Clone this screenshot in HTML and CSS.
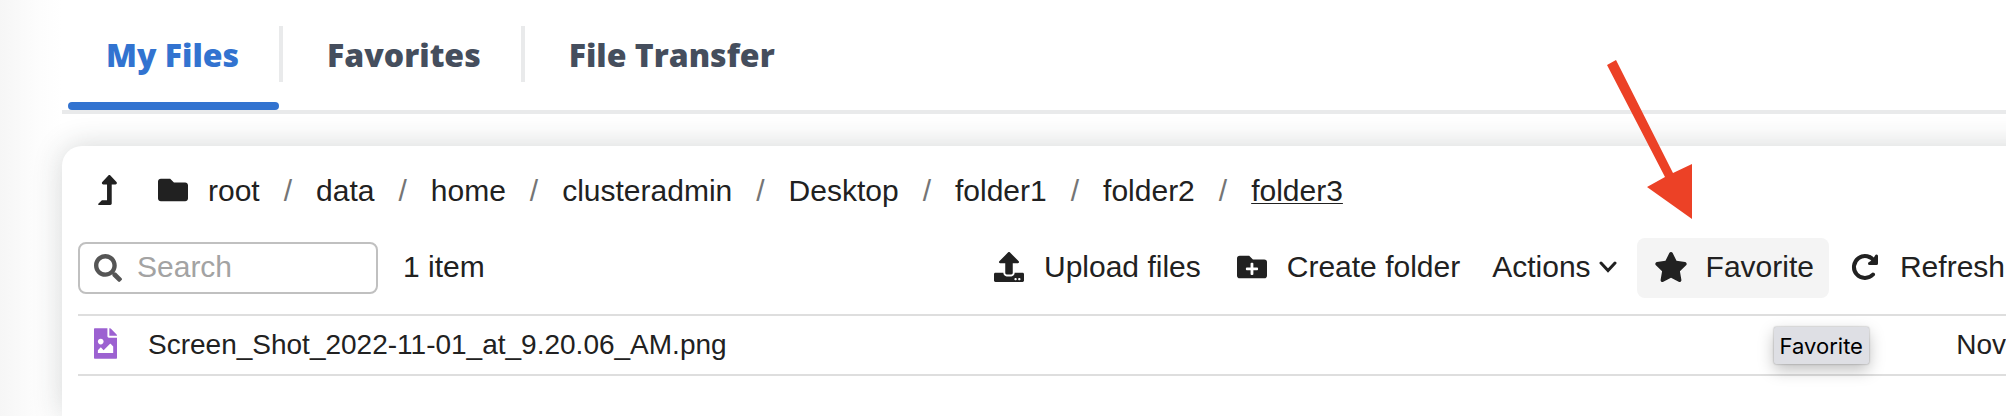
FILE: index.html
```html
<!DOCTYPE html>
<html lang="en">
<head>
<meta charset="utf-8">
<title>My Files</title>
<link rel="stylesheet" href="styles.css">
</head>
<body>
<main class="page">
  <nav class="tabs" aria-label="Sections">
    <a class="tab tab-active" href="#files">My Files</a>
    <a class="tab" href="#favorites">Favorites</a>
    <a class="tab" href="#transfer">File Transfer</a>
  </nav>
  <section class="panel">
    <div class="path">
      <button class="up" type="button" aria-label="Up one level"><svg class="icon-up" viewBox="0 0 320 512"><path d="M313.553 119.669L209.587 7.666c-9.485-10.214-25.676-10.229-35.174 0L70.438 119.669C56.232 134.969 67.062 160 88.025 160H152v272H68.024a11.996 11.996 0 0 0-8.485 3.515l-56 56C-4.021 499.074 1.333 512 12.024 512H208c13.255 0 24-10.745 24-24V160h63.966c20.878 0 31.851-24.969 17.587-40.331z"/></svg></button>
      <svg class="icon" viewBox="0 0 512 512"><path d="M464 128H272l-64-64H48C21.49 64 0 85.49 0 112v288c0 26.51 21.49 48 48 48h416c26.51 0 48-21.49 48-48V176c0-26.51-21.49-48-48-48z"/></svg>
      <ol class="crumbs">
        <li><a href="#root">root</a></li>
        <li><a href="#data">data</a></li>
        <li><a href="#home">home</a></li>
        <li><a href="#clusteradmin">clusteradmin</a></li>
        <li><a href="#desktop">Desktop</a></li>
        <li><a href="#folder1">folder1</a></li>
        <li><a href="#folder2">folder2</a></li>
        <li><a class="current" href="#folder3">folder3</a></li>
      </ol>
    </div>
    <div class="toolbar">
      <label class="search">
        <svg class="icon-search" viewBox="0 0 512 512"><path d="M505 442.7L405.300 343c-4.500-4.500-10.600-7-17-7H372c27.600-35.300 44-79.700 44-128C416 93.100 322.900 0 208 0S0 93.100 0 208s93.100 208 208 208c48.300 0 92.700-16.400 128-44v16.300c0 6.400 2.500 12.500 7 17l99.700 99.700c9.400 9.400 24.600 9.400 33.900 0l28.300-28.300c9.400-9.400 9.400-24.600.1-34zM208 336c-70.700 0-128-57.200-128-128 0-70.700 57.200-128 128-128 70.700 0 128 57.200 128 128 0 70.700-57.200 128-128 128z"/></svg>
        <input class="search-input" type="text" placeholder="Search" aria-label="Search">
      </label>
      <span class="count">1 item</span>
      <div class="actions">
        <button class="action" type="button"><span class="slot"><svg class="icon" viewBox="0 0 512 512"><path d="M296 384h-80c-13.300 0-24-10.700-24-24V192h-87.700c-17.800 0-26.700-21.500-14.100-34.100L242.300 5.700c7.500-7.500 19.800-7.500 27.300 0l152.200 152.200c12.600 12.600 3.700 34.100-14.100 34.100H320v168c0 13.300-10.700 24-24 24zm216-8v112c0 13.300-10.700 24-24 24H24c-13.300 0-24-10.700-24-24V376c0-13.300 10.700-24 24-24h136v8c0 30.900 25.100 56 56 56h80c30.900 0 56-25.100 56-56v-8h136c13.300 0 24 10.700 24 24zm-124 88c0-11-9-20-20-20s-20 9-20 20 9 20 20 20 20-9 20-20zm64 0c0-11-9-20-20-20s-20 9-20 20 9 20 20 20 20-9 20-20z"/></svg></span>Upload files</button>
        <button class="action" type="button"><span class="slot"><svg class="icon" viewBox="0 0 512 512"><path d="M464,128H272L208,64H48A48,48,0,0,0,0,112V400a48,48,0,0,0,48,48H464a48,48,0,0,0,48-48V176A48,48,0,0,0,464,128ZM359.500,296a16,16,0,0,1-16,16h-64v64a16,16,0,0,1-16,16h-16a16,16,0,0,1-16-16V312h-64a16,16,0,0,1-16-16V280a16,16,0,0,1,16-16h64V200a16,16,0,0,1,16-16h16a16,16,0,0,1,16,16v64h64a16,16,0,0,1,16,16Z"/></svg></span>Create folder</button>
        <button class="action action-menu" type="button">Actions<svg class="icon-chevron" viewBox="0 0 18 12"><path d="M2 2l7 7.500L16 2"/></svg></button>
        <button class="action action-hover" type="button"><span class="slot"><svg class="icon icon-star" viewBox="0 0 576 512"><path d="M259.300 17.800L194 150.200 47.900 171.500c-26.200 3.800-36.700 36.100-17.700 54.600l105.700 103-25 145.500c-4.500 26.300 23.200 46 46.400 33.700L288 439.600l130.700 68.700c23.200 12.200 50.900-7.400 46.400-33.700l-25-145.500 105.700-103c19-18.500 8.500-50.800-17.700-54.600L382 150.200 316.700 17.800c-11.700-23.600-45.600-23.900-57.400 0z"/></svg></span>Favorite<span class="tooltip" role="tooltip">Favorite</span></button>
        <button class="action action-last" type="button"><span class="slot"><svg class="icon icon-refresh" viewBox="0 0 30 30"><path class="arc" d="M23 22.500A11 11 0 1 1 24.500 9.500"/><path class="head" d="M26.500 4V11.500H19.500L23.500 9Z"/></svg></span>Refresh</button>
      </div>
    </div>
    <table class="files">
      <tr>
        <td class="type"><svg class="icon-image" viewBox="0 0 384 512"><path d="M384 121.941V128H256V0h6.059a24 24 0 0 1 16.970 7.029l97.941 97.941a24.002 24.002 0 0 1 7.030 16.971zM248 160c-13.200 0-24-10.800-24-24V0H12C5 0 0 5 0 12v488c0 7 5 12 12 12h360c7 0 12-5 12-12V160H248zm-135.455 16c26.510 0 48 21.490 48 48s-21.490 48-48 48-48-21.490-48-48 21.491-48 48-48zm208 240h-256l.485-48.485L104.545 328c4.686-4.686 11.799-4.201 16.485.485L160.545 368 264.060 264.485c4.686-4.686 12.284-4.686 16.971 0L320.545 304v112z"/></svg></td>
        <td class="name">Screen_Shot_2022-11-01_at_9.20.06_AM.png</td>
        <td class="date">Nov</td>
      </tr>
    </table>
  </section>
</main>
<svg class="pointer" viewBox="0 0 86 160" aria-hidden="true"><path d="M0 5L9 0L66 113L85 104V159L40 127L58 117Z"/></svg>
</body>
</html>
```
FILE: styles.css
```css
* { box-sizing: border-box; }

body {
  margin: 0;
  min-height: 100vh;
  overflow: hidden;
  background: linear-gradient(to right, #f6f6f6 0, #fdfdfd 40px, #fff 62px);
  color: #212121;
  font: 30px/36px "Liberation Sans", Arial, sans-serif;
}

a { color: inherit; text-decoration: none; }
svg { display: block; flex: none; fill: currentColor; }

button {
  padding: 0;
  border: 0;
  background: none;
  color: inherit;
  font: inherit;
}

.page {
  display: flex;
  flex-direction: column;
  min-height: 100vh;
  padding-left: 62px;
}

.tabs {
  display: grid;
  grid-auto-flow: column;
  justify-content: start;
  padding-left: 6px;
  border-bottom: 4px solid #e9eaeb;
}

.tab {
  display: grid;
  grid-template: 58px 18px 8px / 1fr auto;
  margin-top: 26px;
  color: #454e5d;
  font: 800 32px/58px "Open Sans", sans-serif;
  padding-left: 38px;
}

.tab + .tab { padding-left: 44px; }

/* divider on the right of each tab but the last */
.tab:not(:last-child)::before {
  content: "";
  grid-area: 1 / 2;
  width: 4px;
  height: 56px;
  margin-left: 40px;
  background: #e9eaeb;
}

.tab-active { color: #3273d0; }

.tab-active::after {
  content: "";
  grid-area: 3 / 1 / 4 / 3;
  margin: 0 4px 0 -38px;
  border-radius: 4px;
  background: #3273d0;
}

/* runs on past the right edge of the window */
.panel {
  flex: 1;
  margin: 32px -40px 0 0;
  padding: 24px 40px 0 16px;
  border-radius: 20px 0 0 0;
  background: #fff;
  box-shadow: 0 0 30px rgba(40, 50, 50, 0.2);
}

.path {
  display: flex;
  align-items: center;
  height: 40px;
  padding-left: 20px;
}

.up { margin-right: 41px; }
.icon-up { width: 19px; height: 30px; }
.icon { width: 30px; height: 30px; }
.icon-star { width: 34px; }

.crumbs {
  display: flex;
  margin: 0 0 0 20px;
  padding: 2px 0 0;
  list-style: none;
}

.crumbs li + li::before {
  content: "/";
  margin: 0 24px;
  color: #757575;
}

.current {
  text-decoration: underline;
  text-decoration-thickness: 1px;
  text-underline-offset: 2px;
}

.toolbar {
  display: flex;
  align-items: center;
  height: 60px;
  margin-top: 28px;
}

.search {
  display: flex;
  align-items: center;
  gap: 15px;
  width: 300px;
  height: 52px;
  padding: 0 14px;
  border: 2px solid #c0c0c0;
  border-radius: 8px;
}

.icon-search { width: 28px; height: 28px; fill: #555; }

.search-input {
  flex: 1;
  min-width: 0;
  padding: 0 0 2px;
  border: 0;
  outline: 0;
  background: none;
  color: inherit;
  font: inherit;
}

.search-input::placeholder { color: #a3a3a3; opacity: 1; }
.count { padding: 0 0 2px 25px; }

.actions {
  display: flex;
  gap: 2px;
  margin-left: auto;
}

.action {
  position: relative;
  display: flex;
  align-items: center;
  gap: 16px;
  height: 60px;
  padding: 0 15px 2px;
  border-radius: 8px;
  white-space: nowrap;
}

.slot {
  display: flex;
  justify-content: center;
  width: 38px;
}

.action-menu { gap: 8px; padding-right: 18px; }
.action-hover { background: #f4f4f4; }
.action-last { padding-right: 1px; }

.icon-chevron {
  width: 18px;
  height: 12px;
  fill: none;
  stroke: currentColor;
  stroke-width: 3;
  stroke-linecap: round;
}

.icon-refresh { fill: none; stroke: currentColor; stroke-width: 4; }
.arc { stroke-linecap: round; }
.head { fill: currentColor; stroke-width: 3; stroke-linejoin: round; }

.tooltip {
  position: absolute;
  top: 89px;
  right: -40px;
  padding: 5px 6px 4px;
  border-radius: 2px;
  background: #dedfe4;
  box-shadow: 0 0 2px rgba(0, 0, 0, 0.4), 0 6px 16px rgba(0, 0, 0, 0.25);
  color: #000;
  font: 22px/28px Inter, sans-serif;
}

.files {
  width: 100%;
  margin-top: 16px;
  border-collapse: collapse;
  border-top: 2px solid #dedede;
  border-bottom: 2px solid #dedede;
  font-size: 28px;
}

.files td { height: 60px; padding: 0; }
.files .type { width: 70px; padding-left: 16px; }
.icon-image { width: 23px; height: 31px; margin-bottom: 4px; fill: #9c61d1; }
.files .date { width: 48px; overflow: hidden; }

.pointer {
  position: absolute;
  top: 60px;
  left: 1607px;
  width: 86px;
  height: 160px;
  fill: #ec4126;
}
```
